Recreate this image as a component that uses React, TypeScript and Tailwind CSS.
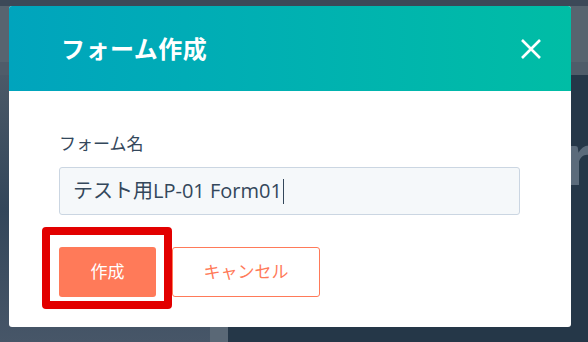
const JP = "font-['Lato','Noto_Sans_CJK_JP',sans-serif]";

function CloseIcon() {
  return (
    <svg width="22" height="22" viewBox="0 0 22 22" fill="none">
      <path d="M2 2 L20 20 M20 2 L2 20" stroke="white" strokeWidth="2.6" />
    </svg>
  );
}

// blurred app page behind the dialog
function Backdrop() {
  return (
    <div className="flex flex-col h-full">
      <div className="h-[6px] bg-[#3c4958]" />
      <div className="h-[56px] bg-[#57646f]" />
      <div className="h-[13px] bg-[#4f5c69]" />
      <div className="flex flex-1">
        <div className="w-[210px] bg-gradient-to-b from-[#4b5967] via-[#33465a] to-[#475668]" />
        <div className="w-[18px] bg-[#5a6876]" />
        <div className="relative flex-1 bg-[#253748]">
          <span className="absolute left-[337px] top-[43px] font-['Lato',sans-serif] font-bold text-[76px] leading-none text-[#5b6b7b]">
            r
          </span>
        </div>
      </div>
    </div>
  );
}

export default function App() {
  return (
    <div className={`relative w-[588px] h-[342px] overflow-hidden bg-[#253748] ${JP}`}>
      <Backdrop />

      <div className="absolute left-[9px] top-[6px] w-[562px] h-[321px] flex flex-col rounded-[3px] overflow-hidden bg-white">
        <div className="h-[85px] shrink-0 flex items-center justify-between pl-[52px] pr-[29px] bg-gradient-to-r from-[#00a4bd] to-[#00bda5]">
          <h1 className="text-[24px] font-bold text-white tracking-[0.5px]">フォーム作成</h1>
          <CloseIcon />
        </div>

        <div className="flex flex-col pl-[50px] pr-[51px] pt-[41px]">
          <label className="text-[17px] leading-[24px] text-[#33475b]">フォーム名</label>
          <div className="mt-[11px] h-[48px] flex items-center px-[13px] rounded-[3px] border border-[#cbd6e2] bg-[#f5f8fa] font-['Open_Sans','Noto_Sans_CJK_JP',sans-serif] text-[20px] text-[#33475b]">
            テスト用LP-01 Form01
            <span className="ml-[1px] w-[1px] h-[25px] bg-[#33475b]" />
          </div>

          <div className="mt-[32px] flex gap-[16px]">
            <div className="relative">
              <button className="w-[97px] h-[50px] rounded-[3px] bg-[#ff7a59] text-white text-[17px]">
                作成
              </button>
              <div className="absolute -left-[17px] -top-[20px] w-[130px] h-[82px] rounded-[4px] border-[8px] border-[#e20000]" />
            </div>
            <button className="w-[148px] h-[50px] rounded-[3px] border border-[#ff7a59] bg-white text-[#ff7a59] text-[17px]">
              キャンセル
            </button>
          </div>
        </div>
      </div>
    </div>
  );
}
